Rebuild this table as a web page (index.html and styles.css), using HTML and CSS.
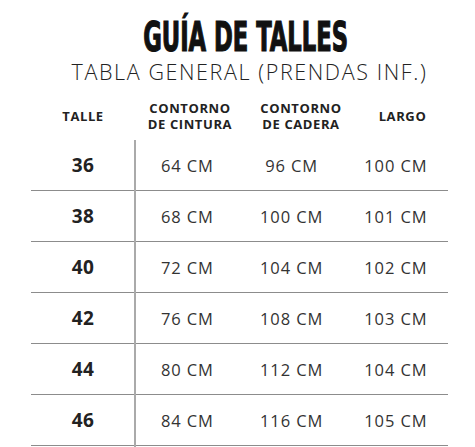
FILE: index.html
```html
<!DOCTYPE html>
<html lang="es">
<head>
<meta charset="utf-8">
<link rel="stylesheet" href="styles.css">
</head>
<body>
<div class="page">
  <h1 class="title">GUÍA DE TALLES</h1>
  <p class="subtitle">TABLA GENERAL (PRENDAS INF.)</p>
  <div class="head">
    <div class="hcell">TALLE</div>
    <div class="hcell">CONTORNO<br>DE CINTURA</div>
    <div class="hcell">CONTORNO<br>DE CADERA</div>
    <div class="hcell">LARGO</div>
  </div>
  <div class="table">
    <div class="row"><div class="size">36</div><div class="val">64 CM</div><div class="val">96 CM</div><div class="val">100 CM</div></div>
    <div class="row"><div class="size">38</div><div class="val">68 CM</div><div class="val">100 CM</div><div class="val">101 CM</div></div>
    <div class="row"><div class="size">40</div><div class="val">72 CM</div><div class="val">104 CM</div><div class="val">102 CM</div></div>
    <div class="row"><div class="size">42</div><div class="val">76 CM</div><div class="val">108 CM</div><div class="val">103 CM</div></div>
    <div class="row"><div class="size">44</div><div class="val">80 CM</div><div class="val">112 CM</div><div class="val">104 CM</div></div>
    <div class="row"><div class="size">46</div><div class="val">84 CM</div><div class="val">116 CM</div><div class="val">105 CM</div></div>
    <div class="row-tail"></div>
  </div>
</div>
</body>
</html>
```
FILE: styles.css
```css
html, body {
  margin: 0;
  padding: 0;
  background: #fff;
}
body {
  width: 475px;
  height: 447px;
  overflow: hidden;
  color: #222;
  font-family: "Open Sans", "DejaVu Sans", sans-serif;
}
.page {
  display: flex;
  flex-direction: column;
  align-items: center;
}
.title {
  margin: 16px 0 0 16px;
  font-family: "DejaVu Sans Condensed", "DejaVu Sans", sans-serif;
  font-weight: 700;
  font-size: 40px;
  line-height: 42px;
  letter-spacing: 0;
  transform: scaleX(0.63);
  -webkit-text-stroke: 1.2px #111;
  color: #111;
}
.subtitle {
  margin: 2px 0 0 24px;
  font-weight: 300;
  font-size: 21.5px;
  line-height: 24px;
  letter-spacing: 1.6px;
  color: #222;
}
.head,
.table {
  align-self: flex-start;
  margin-left: 31px;
  width: 417px;
}
.head {
  margin-top: 15px;
  display: grid;
  grid-template-columns: 104px 110px 112px 91px;
  align-items: center;
  height: 34px;
}
.hcell {
  text-align: center;
  font-weight: 700;
  font-size: 13px;
  line-height: 16px;
  letter-spacing: 0.6px;
  color: #222;
}
.table {
  margin-top: 7px;
  position: relative;
}
.table::before {
  content: "";
  position: absolute;
  left: 103px;
  top: 0;
  bottom: 0;
  width: 2px;
  background: #aaa;
}
.row {
  display: grid;
  grid-template-columns: repeat(4, 1fr);
  align-items: center;
  height: 50px;
  border-bottom: 1.5px solid #8c8c8c;
}
.row-tail {
  height: 4px;
}
.size {
  text-align: center;
  font-weight: 700;
  font-size: 19px;
  letter-spacing: 0.5px;
}
.val {
  text-align: center;
  font-weight: 400;
  font-size: 16.5px;
  letter-spacing: 0.9px;
  color: #333;
}
```
